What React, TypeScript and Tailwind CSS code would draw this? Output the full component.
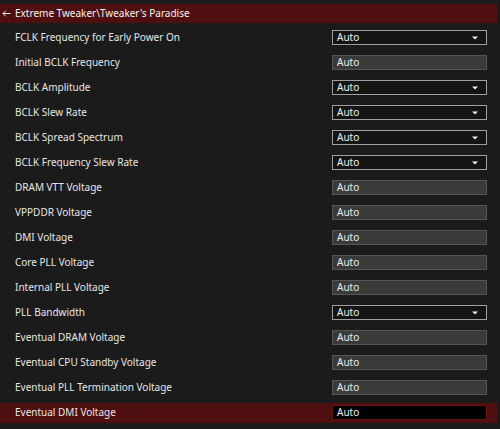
import React from "react";

type Row = { label: string; kind: "select" | "text" };

const rows: Row[] = [
  { label: "FCLK Frequency for Early Power On", kind: "select" },
  { label: "Initial BCLK Frequency", kind: "text" },
  { label: "BCLK Amplitude", kind: "select" },
  { label: "BCLK Slew Rate", kind: "select" },
  { label: "BCLK Spread Spectrum", kind: "select" },
  { label: "BCLK Frequency Slew Rate", kind: "select" },
  { label: "DRAM VTT Voltage", kind: "text" },
  { label: "VPPDDR Voltage", kind: "text" },
  { label: "DMI Voltage", kind: "text" },
  { label: "Core PLL Voltage", kind: "text" },
  { label: "Internal PLL Voltage", kind: "text" },
  { label: "PLL Bandwidth", kind: "select" },
  { label: "Eventual DRAM Voltage", kind: "text" },
  { label: "Eventual CPU Standby Voltage", kind: "text" },
  { label: "Eventual PLL Termination Voltage", kind: "text" },
  { label: "Eventual DMI Voltage", kind: "text" },
];

function Field({ kind, selected }: { kind: "select" | "text"; selected: boolean }) {
  if (selected) {
    return (
      <div className="w-[155px] h-[15px] bg-black border border-[#6a1012] flex items-center pl-[4px] text-[10px] text-[#f0f0f0]">
        Auto
      </div>
    );
  }
  if (kind === "select") {
    return (
      <div className="w-[155px] h-[15px] bg-[#141414] border-[1.5px] border-[#a0a0a0] flex items-center justify-between pl-[4px] pr-[8px] text-[10px] text-[#f0f0f0]">
        <span>Auto</span>
        <svg width="6" height="4" viewBox="0 0 6 4">
          <path d="M0 0.5 H6 L3 3.5 Z" fill="#f0f0f0" />
        </svg>
      </div>
    );
  }
  return (
    <div className="w-[155px] h-[15px] bg-[#3a3a3a] border border-[#565656] flex items-center pl-[4px] text-[10px] text-[#ececec]">
      Auto
    </div>
  );
}

export default function App() {
  return (
    <div
      className="w-[500px] h-[429px] bg-[#1b1b1b] overflow-hidden pt-[4px]"
      style={{ fontFamily: '"Noto Sans", "Open Sans", sans-serif' }}
    >
      <div className="w-[497px] h-[19px] bg-[#4f0e0f] flex items-center text-[10px] text-[#f2f2f2]">
        <span className="w-[15px] pl-[2px] flex items-center">
          <svg width="9" height="7" viewBox="0 0 9 7">
            <path d="M8.5 3.5 H1 M3.8 0.7 L1 3.5 L3.8 6.3" stroke="#f2f2f2" strokeWidth="1" fill="none" />
          </svg>
        </span>
        <span>Extreme Tweaker\Tweaker's Paradise</span>
      </div>
      <div className="pt-[2px]">
        {rows.map((r, i) => {
          const selected = i === rows.length - 1;
          return (
            <div key={r.label} className="h-[25px] flex items-center">
              <div
                className={
                  "w-[497px] h-[20px] flex items-center " +
                  (selected ? "bg-[#4f0e0f]" : "")
                }
              >
                <div className="w-[332px] pl-[15px] text-[10px] text-[#e6e6e6]">{r.label}</div>
                <Field kind={r.kind} selected={selected} />
              </div>
            </div>
          );
        })}
      </div>
    </div>
  );
}
